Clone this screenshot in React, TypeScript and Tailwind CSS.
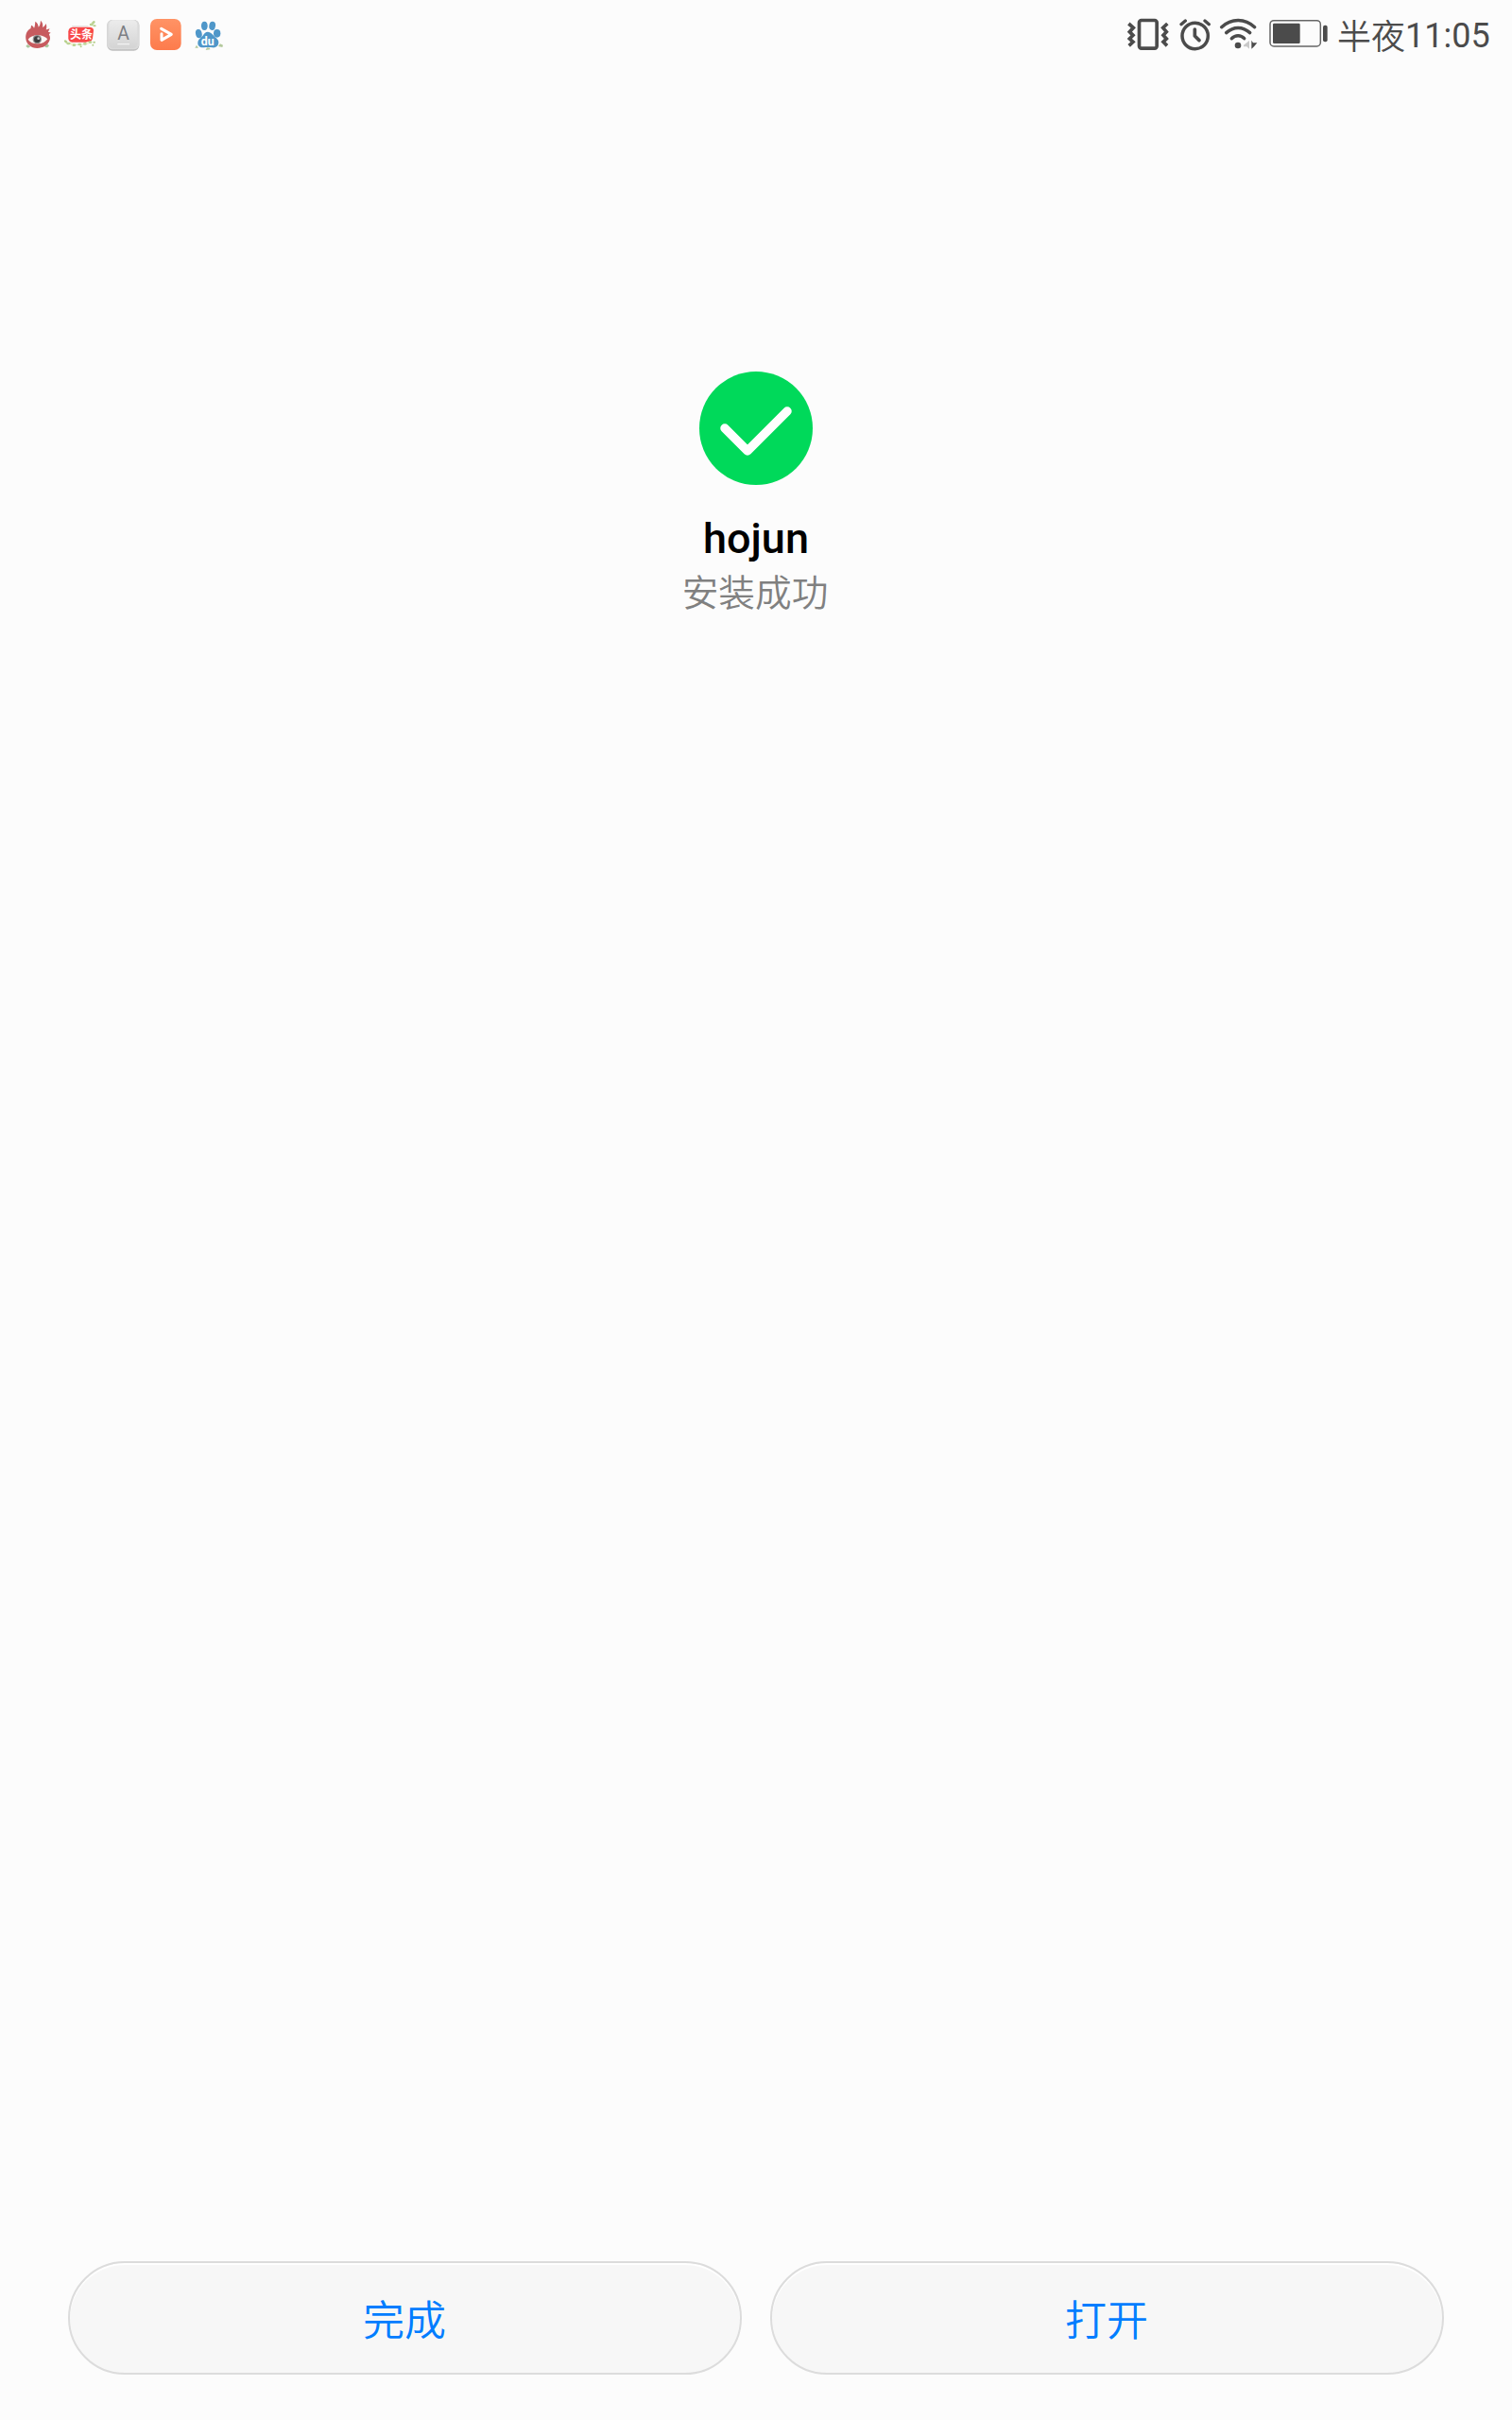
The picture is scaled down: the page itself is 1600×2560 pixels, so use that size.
import type { ReactNode } from "react";

type GlyphProps = { viewBox: string; className: string; children: ReactNode };

function Glyph({ viewBox, className, children }: GlyphProps) {
  return (
    <svg viewBox={viewBox} className={className} fill="none" aria-hidden="true">
      {children}
    </svg>
  );
}

function EyeIcon() {
  return (
    <Glyph viewBox="24 -15 135 216" className="h-[72px] w-[45px]">
      <path d="M52 132l5-6 10 7-8 4zM113 130l8-6 5 6-5 6-8-1z" fill="#a9c79d" />
      <path
        d="M52 108C50 92 58 80 67 76C69 71 68 68 70 65C75 68 77 71 78 74C81 69 81 62 82 53C89 57 92 65 92 71C97 67 98 59 99 50C106 56 107 65 105 72C110 70 113 66 116 60C119 68 118 75 116 79C120 79 122 78 127 75C127 80 124 83 123 87C127 87 129 88 131 89C127 91 126 92 126 95C129 100 130 106 128 112C122 129 107 138 88 138C68 137 54 126 52 108Z"
        fill="#c75b5f"
      />
      <path d="M59 110C65 102 76 97 90 97C104 97 115 102 121 109C114 118 104 124 89 124C75 124 65 119 59 110Z" fill="#faf7f5" />
      <circle cx="88" cy="110" r="14" fill="#8f8f8f" />
      <circle cx="88" cy="110" r="10" fill="#3b3b3d" />
      <circle cx="92" cy="107" r="4" fill="#c9c9c9" />
    </Glyph>
  );
}

function NewsIcon() {
  return (
    <Glyph viewBox="159 -15 135 216" className="h-[72px] w-[45px]">
      <path d="M198 68h52" stroke="#e8e5e3" strokeWidth="4" />
      <path d="M201 71H256Q268 72 267 83L264 106Q262 118 250 119H199Q187 118 187 106V85Q188 72 201 71Z" fill="#f84848" />
      <text x="228" y="109" textAnchor="middle" fontSize="36" fontWeight="700" fill="#fff" className="font-['Noto_Sans_CJK_SC',sans-serif]">头条</text>
      <g fill="#b5cf8a">
        <ellipse cx="266" cy="57" rx="7" ry="4" transform="rotate(-40 266 57)" />
        <ellipse cx="260" cy="63" rx="6" ry="4" />
        <ellipse cx="270" cy="67" rx="5" ry="3" />
        <ellipse cx="179" cy="117" rx="6" ry="4" transform="rotate(35 179 117)" />
        <ellipse cx="188" cy="123" rx="7" ry="4" />
        <ellipse cx="205" cy="128" rx="6" ry="4" />
        <ellipse cx="223" cy="126" rx="6" ry="4" />
        <ellipse cx="240" cy="124" rx="6" ry="4" />
        <ellipse cx="256" cy="119" rx="6" ry="4" />
        <ellipse cx="269" cy="119" rx="4" ry="3" />
        <circle cx="265" cy="128" r="3" />
        <circle cx="227" cy="133" r="3" />
      </g>
      <path d="M182 120c22 9 55 10 80-2M258 65l8-9" stroke="#cfdcae" strokeWidth="2" />
      <circle cx="197" cy="125" r="4" fill="#f4efcf" />
      <circle cx="248" cy="121" r="4" fill="#f4efcf" />
    </Glyph>
  );
}

function KeyboardIcon() {
  return (
    <Glyph viewBox="24 -15 135 216" className="h-[72px] w-[45px]">
      <defs>
        <linearGradient id="key" x1="0" y1="0" x2="0" y2="1">
          <stop offset="0" stopColor="#ececec" />
          <stop offset="1" stopColor="#d4d4d4" />
        </linearGradient>
      </defs>
      <rect x="40" y="48" width="102" height="98" rx="17" fill="#bdbdbd" />
      <rect x="40" y="48" width="102" height="94" rx="17" fill="#dadada" />
      <rect x="46" y="49" width="90" height="89" rx="14" fill="url(#key)" />
      <text x="91.5" y="110" textAnchor="middle" fontSize="58" fill="#7c7e83" className="font-[Roboto,sans-serif]">A</text>
      <path d="M73 125h38" stroke="#f8f8f8" strokeWidth="3" />
    </Glyph>
  );
}

function VideoIcon() {
  return (
    <Glyph viewBox="159 -15 135 216" className="h-[72px] w-[45px]">
      <defs>
        <linearGradient id="video" x1="0" y1="0" x2="0" y2="1">
          <stop offset="0" stopColor="#ff9365" />
          <stop offset="1" stopColor="#fd7b4c" />
        </linearGradient>
      </defs>
      <rect x="177" y="45" width="98" height="99" rx="21" fill="url(#video)" />
      <path d="M212 76L244 94L213 112V92" stroke="#fff" strokeWidth="9" strokeLinecap="round" strokeLinejoin="round" />
    </Glyph>
  );
}

function PawIcon() {
  return (
    <Glyph viewBox="294 -15 135 216" className="h-[72px] w-[45px]">
      <g fill="#4f97c9">
        <ellipse cx="331" cy="92" rx="10" ry="14" transform="rotate(-12 331 92)" />
        <ellipse cx="349" cy="67" rx="10" ry="14" />
        <ellipse cx="374" cy="67" rx="10" ry="14" transform="rotate(8 374 67)" />
        <ellipse cx="389" cy="91" rx="11" ry="13" />
        <path d="M360 86C368 86 374 93 379 99C387 107 395 111 394 121C393 132 385 137 375 136C366 135 356 135 347 136C334 137 327 130 328 120C329 109 338 105 344 98C348 92 352 86 360 86Z" />
      </g>
      <text x="359" y="128" textAnchor="middle" fontSize="37" fontWeight="700" fill="#fff" className="font-[Roboto,sans-serif]">du</text>
      <g fill="#b3c99c">
        <path d="M319 137l5-9 6 9z" />
        <path d="M353 144l4-8 9 1 1 5z" />
        <path d="M393 132l6-8 9 4-2 7z" />
      </g>
    </Glyph>
  );
}

function VibrateIcon() {
  return (
    <Glyph viewBox="30 -15 150 216" className="h-[72px] w-[50px]">
      <rect x="76.5" y="49.5" width="56" height="89" rx="7" stroke="#4b4b4b" strokeWidth="11" />
      <path d="M43 60L58 73L46 86L57 97L46 108L57 118L44 130M166 60L152 73L163 86L153 97L163 108L153 118L165 130" stroke="#4b4b4b" strokeWidth="11" />
    </Glyph>
  );
}

function AlarmIcon() {
  return (
    <Glyph viewBox="180 -15 144 216" className="h-[72px] w-[48px]">
      <g stroke="#4b4b4b" strokeLinecap="round" strokeLinejoin="round">
        <circle cx="254" cy="99" r="41" strokeWidth="10.5" />
        <path d="M253 78V99L267 113" strokeWidth="11" />
        <path d="M210 62L223 51M285 51L298 62" strokeWidth="10" />
      </g>
    </Glyph>
  );
}

function WifiIcon() {
  return (
    <Glyph viewBox="324 -15 135 216" className="h-[72px] w-[45px]">
      <path d="M338 71C369 42 412 42 443 71M353 89C376 68 405 68 428 89M370 107C382 95 399 95 410 107" stroke="#4b4b4b" strokeWidth="10.5" strokeLinecap="round" />
      <circle cx="390" cy="129" r="10" fill="#4b4b4b" />
      <path d="M426 114V140L418 133H408V128Z" fill="#c9c9c9" />
      <path d="M433 113L438 121H451L441 133L433 140Z" fill="#4b4b4b" />
    </Glyph>
  );
}

function BatteryIcon() {
  return (
    <Glyph viewBox="30 -15 204 216" className="h-[72px] w-[68px]">
      <rect x="42" y="50" width="160" height="82" rx="12" stroke="#666666" strokeWidth="4.5" />
      <rect x="51" y="59" width="86" height="64" rx="4" fill="#4b4b4b" />
      <rect x="210" y="65" width="14" height="53" rx="6" fill="#4b4b4b" />
    </Glyph>
  );
}

function StatusBar() {
  return (
    <header className="flex h-[72px] shrink-0 items-center justify-between pl-[18px] pr-[23px]">
      <div className="flex items-center">
        <EyeIcon />
        <NewsIcon />
        <KeyboardIcon />
        <VideoIcon />
        <PawIcon />
      </div>
      <div className="flex items-center">
        <VibrateIcon />
        <AlarmIcon />
        <WifiIcon />
        <div className="pl-[7px]">
          <BatteryIcon />
        </div>
        <div className="flex w-[169px] items-baseline whitespace-nowrap pl-[7px] pt-[4px] text-[36px] leading-[42px] text-[#4b4b4b]">
          <span className="align-baseline font-[350]"><span className="inline-block translate-y-[2px]">半夜</span></span>
          <span>11:05</span>
        </div>
      </div>
    </header>
  );
}

function PillButton({ label }: { label: string }) {
  return (
    <button className="h-[120px] flex-1 rounded-full border-2 border-[#dcdcdc] bg-[#f7f7f7] pr-[1px] font-['Noto_Sans_CJK_SC',sans-serif] text-[44px] font-[350] leading-[60px] text-[#007dff] shadow-[inset_0_2px_1px_#ffffff]">
      {label}
    </button>
  );
}

export default function App() {
  return (
    <div className="flex h-[2560px] w-[1600px] flex-col bg-[#fcfcfc] font-[Roboto,'Noto_Sans_CJK_SC',sans-serif]">
      <StatusBar />
      <main className="flex flex-1 flex-col items-center pt-[321px]">
        <svg viewBox="0 0 120 120" className="size-[120px]" fill="none" aria-hidden="true">
          <circle cx="60" cy="60" r="60" fill="#00d95a" />
          <path d="M27 60L51 84L93 42" stroke="#fff" strokeWidth="9.5" strokeLinecap="round" strokeLinejoin="round" />
        </svg>
        <h1 className="mt-[30px] text-[45px] font-medium leading-[54px] text-black">hojun</h1>
        <p className="mt-[3px] pr-[2px] text-[38.7px] font-[350] leading-[56px] text-[#808080]">安装成功</p>
      </main>
      <footer className="flex gap-[30px] px-[72px] pb-[48px]">
        <PillButton label="完成" />
        <PillButton label="打开" />
      </footer>
    </div>
  );
}
